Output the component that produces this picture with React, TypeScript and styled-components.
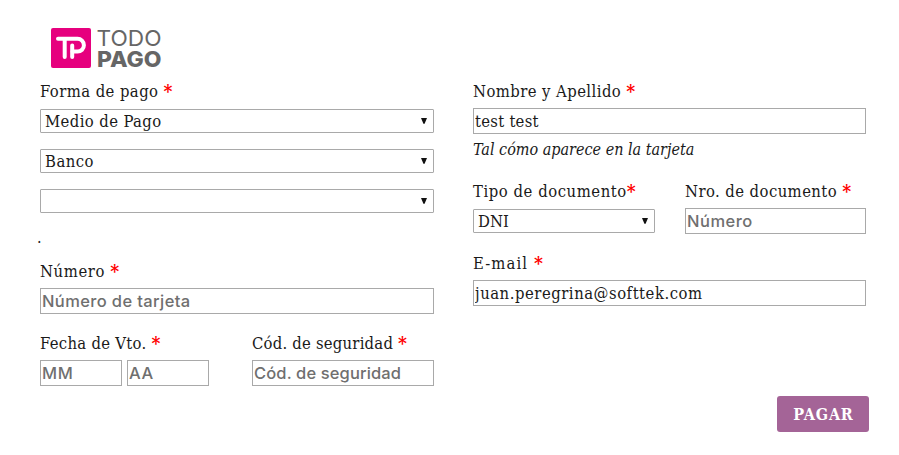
import React from "react";
import styled, { createGlobalStyle } from "styled-components";

const serif = `"DejaVu Serif Condensed", "DejaVu Serif", serif`;

const GlobalStyle = createGlobalStyle`
  * { box-sizing: border-box; }
  body { margin: 0; background: #fff; color: #1a1a1a; font-family: ${serif}; font-stretch: condensed; font-size: 16px; }
`;

const Page = styled.main`
  width: 899px;
  height: 455px;
  padding: 28px 30px 0 40px;
  overflow: hidden;
`;

const Logo = styled.svg`
  display: block;
  margin-left: 11px;
  overflow: visible;
`;

const Columns = styled.form`
  display: grid;
  grid-template-columns: 394px 393px;
  column-gap: 39px;
  padding-top: 12px;
`;

const Column = styled.div`
  display: flex;
  flex-direction: column;
`;

const Row = styled.div<{ $columns: string; $gap: number; $top: number }>`
  display: grid;
  grid-template-columns: ${(p) => p.$columns};
  column-gap: ${(p) => p.$gap}px;
  margin-top: ${(p) => p.$top}px;
`;

const Field = styled.div<{ $top?: number }>`
  margin-top: ${(p) => p.$top ?? 0}px;
`;

const Label = styled.label<{ $track?: number }>`
  display: block;
  height: 28px;
  line-height: 24px;
  font-size: 16.5px;
  white-space: nowrap;
  letter-spacing: ${(p) => p.$track ?? 0.43}px;
`;

const Required = styled.span`
  color: #f00;
  font-size: 19px;
  font-weight: bold;
  line-height: 0;
  vertical-align: -1px;
  letter-spacing: 0;
`;

const Input = styled.input<{ $track?: number }>`
  display: block;
  width: 100%;
  height: 26px;
  padding: 1px;
  border: 1px solid #a9a9a9;
  border-radius: 0;
  background: #fff;
  color: #1a1a1a;
  font: 16.5px ${serif};
  font-stretch: condensed;
  letter-spacing: ${(p) => p.$track ?? 0}px;
  outline: none;
  &::placeholder {
    color: #6f6f6f;
    opacity: 1;
    font: 500 16.5px Inter, sans-serif;
  }
`;

const SelectBox = styled.div<{ $top: number }>`
  display: grid;
  align-items: center;
  height: 24px;
  margin-top: ${(p) => p.$top}px;
  border: 1px solid #a9a9a9;
  border-radius: 1px;
`;

const Select = styled.select<{ $track?: number }>`
  grid-area: 1 / 1;
  appearance: none;
  width: 100%;
  height: 22px;
  padding: 1px 4px 0;
  border: 0;
  background: transparent;
  color: #1a1a1a;
  font: 16.5px/22px ${serif};
  font-stretch: condensed;
  letter-spacing: ${(p) => p.$track ?? 0}px;
  outline: none;
`;

const Arrow = styled.svg`
  grid-area: 1 / 1;
  justify-self: end;
  margin-right: 6px;
  pointer-events: none;
`;

const Dot = styled.div`
  height: 20px;
  margin: 14px 0 0 -3px;
  line-height: 22px;
`;

const DateInputs = styled.div`
  display: grid;
  grid-template-columns: 82px 82px;
  column-gap: 5px;
`;

const Note = styled.em`
  height: 30px;
  line-height: 32px;
  white-space: nowrap;
`;

const PayButton = styled.button`
  align-self: flex-end;
  width: 92px;
  height: 36px;
  margin: 90px -3px 0 0;
  padding: 0 0 0 1px;
  border: 0;
  border-radius: 3px;
  background: #a46497;
  color: #fff;
  font: bold 16px ${serif};
  font-stretch: condensed;
  letter-spacing: 0.8px;
`;

type DropdownProps = { id: string; value: string; top?: number; track?: number };

function Dropdown({ id, value, top = 0, track }: DropdownProps) {
  return (
    <SelectBox $top={top}>
      <Select id={id} aria-label={value || id} $track={track} defaultValue={value}>
        <option value={value}>{value}</option>
      </Select>
      <Arrow width="6" height="6" viewBox="0 0 6 6">
        <path d="M0 0h6L3.6 5.7H2.4Z" fill="#111" />
      </Arrow>
    </SelectBox>
  );
}

function Mark() {
  return <Required>*</Required>;
}

export default function App() {
  return (
    <>
      <GlobalStyle />
      <Page>
        <Logo width="111" height="40" viewBox="0 0 111 40">
          <rect width="40" height="40" rx="2" fill="#e6007e" />
          <g fill="none" stroke="#fff" strokeWidth="4" strokeLinecap="round" strokeLinejoin="round">
            <path d="M7 10.8H26.5A6.4 6.4 0 0 1 26.5 23.6H21.5" />
            <path d="M13.7 11V29M21.2 17.5V29" />
          </g>
          <g fill="#666" fontFamily="Inter, sans-serif">
            <text x="45.5" y="18.2" fontSize="22" fontWeight="400" textLength="65" lengthAdjust="spacingAndGlyphs">TODO</text>
            <text x="46" y="39" fontSize="22" fontWeight="800" textLength="64.5" lengthAdjust="spacingAndGlyphs">PAGO</text>
          </g>
        </Logo>
        <Columns>
          <Column>
            <Label htmlFor="medio">Forma de pago <Mark /></Label>
            <Dropdown id="medio" value="Medio de Pago" top={1} track={0.4} />
            <Dropdown id="banco" value="Banco" top={16} track={0.47} />
            <Dropdown id="cuotas" value="" top={16} />
            <Dot>.</Dot>
            <Field $top={13}>
              <Label htmlFor="numero" $track={0.6}>Número <Mark /></Label>
              <Input id="numero" placeholder="Número de tarjeta" $track={0.38} />
            </Field>
            <Row $columns="169px 182px" $gap={43} $top={18}>
              <Field>
                <Label htmlFor="mes" $track={0.3}>Fecha de Vto. <Mark /></Label>
                <DateInputs>
                  <Input id="mes" placeholder="MM" $track={0.6} />
                  <Input placeholder="AA" aria-label="Año" $track={0.5} />
                </DateInputs>
              </Field>
              <Field>
                <Label htmlFor="codigo" $track={0.22}>Cód. de seguridad <Mark /></Label>
                <Input id="codigo" placeholder="Cód. de seguridad" $track={0.12} />
              </Field>
            </Row>
          </Column>
          <Column>
            <Label htmlFor="nombre">Nombre y Apellido <Mark /></Label>
            <Input id="nombre" defaultValue="test test" $track={0.27} />
            <Note>Tal cómo aparece en la tarjeta</Note>
            <Row $columns="182px 181px" $gap={30} $top={16}>
              <Field>
                <Label htmlFor="tipo" $track={0.55}>Tipo de documento<Mark /></Label>
                <Dropdown id="tipo" value="DNI" top={1} />
              </Field>
              <Field>
                <Label htmlFor="documento">Nro. de documento <Mark /></Label>
                <Input id="documento" placeholder="Número" $track={0.5} />
              </Field>
            </Row>
            <Field $top={18}>
              <Label htmlFor="email" $track={1.1}>E-mail <Mark /></Label>
              <Input id="email" defaultValue="juan.peregrina@softtek.com" $track={0.53} />
            </Field>
            <PayButton type="button">PAGAR</PayButton>
          </Column>
        </Columns>
      </Page>
    </>
  );
}
